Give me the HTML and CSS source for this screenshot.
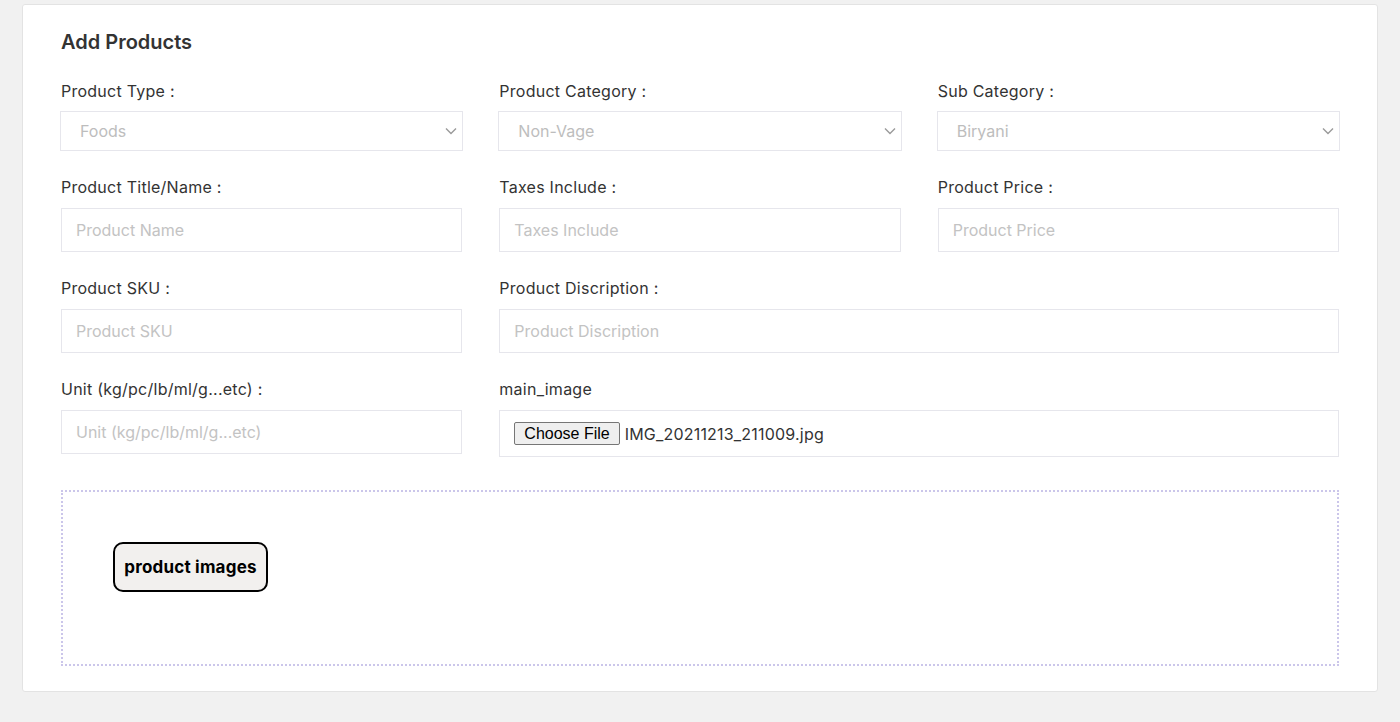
FILE: index.html
```html
<!DOCTYPE html>
<html lang="en">
<head>
<meta charset="utf-8">
<title>Add Products</title>
<link rel="stylesheet" href="styles.css">
</head>
<body>
<div class="page">
  <div class="card">
    <h2 class="title">Add Products</h2>
    <div class="grid">
      <div class="field">
        <label class="label">Product Type :</label>
        <div class="select-wrap">
          <select class="select"><option>Foods</option></select>
          <svg class="chev" width="12" height="8" viewBox="0 0 12 8"><path d="M1 1.5l5 5 5-5" fill="none" stroke="#9a9a9a" stroke-width="1.4"/></svg>
        </div>
      </div>
      <div class="field">
        <label class="label">Product Category :</label>
        <div class="select-wrap">
          <select class="select"><option>Non-Vage</option></select>
          <svg class="chev" width="12" height="8" viewBox="0 0 12 8"><path d="M1 1.5l5 5 5-5" fill="none" stroke="#9a9a9a" stroke-width="1.4"/></svg>
        </div>
      </div>
      <div class="field">
        <label class="label">Sub Category :</label>
        <div class="select-wrap">
          <select class="select"><option>Biryani</option></select>
          <svg class="chev" width="12" height="8" viewBox="0 0 12 8"><path d="M1 1.5l5 5 5-5" fill="none" stroke="#9a9a9a" stroke-width="1.4"/></svg>
        </div>
      </div>

      <div class="field">
        <label class="label">Product Title/Name :</label>
        <input class="input" type="text" placeholder="Product Name">
      </div>
      <div class="field">
        <label class="label">Taxes Include :</label>
        <input class="input" type="text" placeholder="Taxes Include">
      </div>
      <div class="field">
        <label class="label">Product Price :</label>
        <input class="input" type="text" placeholder="Product Price">
      </div>

      <div class="field">
        <label class="label">Product SKU :</label>
        <input class="input" type="text" placeholder="Product SKU">
      </div>
      <div class="field span2">
        <label class="label">Product Discription :</label>
        <input class="input" type="text" placeholder="Product Discription">
      </div>

      <div class="field">
        <label class="label">Unit (kg/pc/lb/ml/g...etc) :</label>
        <input class="input" type="text" placeholder="Unit (kg/pc/lb/ml/g...etc)">
      </div>
      <div class="field span2">
        <label class="label">main_image</label>
        <div class="file-box">
          <button class="file-btn" type="button">Choose File</button>
          <span class="file-name">IMG_20211213_211009.jpg</span>
        </div>
      </div>
    </div>
    <div class="dropzone">
      <button class="img-btn" type="button">product images</button>
    </div>
  </div>
</div>
</body>
</html>
```
FILE: styles.css
```css
* { box-sizing: border-box; }
html, body { margin: 0; padding: 0; }
body {
  background: #f1f1f1;
  font-family: "Inter", "Roboto", "Liberation Sans", sans-serif;
  color: #333;
}
.page {
  padding: 4px 22px 30px 22px;
}
.card {
  background: #fff;
  border: 1px solid #e3e3e3;
  border-radius: 3px;
  padding: 25px 38px 25px 38px;
}
.title {
  margin: 0 0 27px 0;
  font-size: 20px;
  line-height: 24px;
  font-weight: 600;
  color: #333;
}
.grid {
  display: grid;
  grid-template-columns: 1fr 1fr 1fr;
  column-gap: 37px;
  row-gap: 26px;
}
.span2 { grid-column: span 2; }
.field { display: flex; flex-direction: column; }
.label {
  font-size: 16px;
  line-height: 20px;
  margin-bottom: 11px;
  color: #333;
  letter-spacing: 0.25px;
}
.select-wrap { position: relative; margin: -1px -1px 0 -1px; }
.select {
  appearance: none;
  -webkit-appearance: none;
  width: 100%;
  height: 40px;
  border: 1px solid #e6e6ec;
  border-radius: 0;
  background: #fff;
  padding: 0 19px;
  font-family: inherit;
  font-size: 16px;
  color: #bdbdbd;
  outline: none;
}
.chev {
  position: absolute;
  right: 6px;
  top: 16px;
  pointer-events: none;
}
.input {
  width: 100%;
  height: 44px;
  border: 1px solid #e6e6ec;
  border-radius: 0;
  padding: 0 14px;
  font-family: inherit;
  font-size: 16px;
  color: #333;
  outline: none;
}
.input::placeholder { color: #c3c3c3; }
.file-box {
  height: 47px;
  border: 1px solid #e6e6ec;
  padding: 0 14px;
  display: flex;
  align-items: center;
  gap: 5px;
}
.file-btn {
  font-family: "Liberation Sans", Arial, sans-serif;
  font-size: 16px;
  color: #000;
  background: #efefef;
  border: 1px solid #767676;
  border-radius: 2px;
  height: 23px;
  padding: 0 9px;
  line-height: 19px;
}
.file-name {
  font-size: 16px;
  color: #333;
  letter-spacing: 0.2px;
}
.dropzone {
  margin-top: 33px;
  height: 176px;
  border: 2px dotted #cbc6ea;
  padding: 50px 50px;
}
.img-btn {
  height: 50px;
  width: 155px;
  border: 2px solid #000;
  border-radius: 10px;
  background: #f2f0ee;
  font-family: inherit;
  font-weight: 700;
  font-size: 17px;
  letter-spacing: 0.2px;
  color: #000;
  padding: 0;
}
```
